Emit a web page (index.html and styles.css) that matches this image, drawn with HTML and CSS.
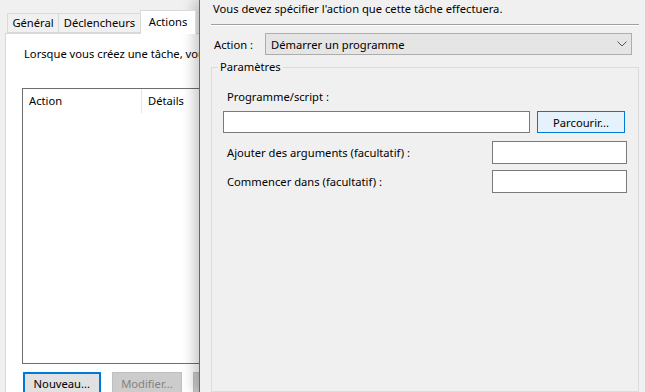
FILE: index.html
```html
<!DOCTYPE html>
<html lang="fr">
  <head>
    <meta charset="UTF-8" />
    <meta name="viewport" content="width=device-width, initial-scale=1.0" />
    <title>Nouvelle action</title>
    <link rel="stylesheet" href="styles.css">
  </head>
  <body>
    <div class="screen">
      <div class="task-window">
        <div class="tabs">
          <div class="tab tab-general">Général</div>
          <div class="tab tab-triggers">Déclencheurs</div>
          <div class="tab tab-actions active">Actions</div>
        </div>
        <div class="tab-panel">
          <p class="intro">Lorsque vous créez une tâche, vous</p>
          <div class="list">
            <div class="list-head">
              <span class="col-action">Action</span>
              <span class="col-details">Détails</span>
            </div>
          </div>
          <div class="list-buttons">
            <button class="btn btn-focus">Nouveau...</button>
            <button class="btn" disabled>Modifier...</button>
            <button class="btn" disabled>Supprimer</button>
          </div>
        </div>
      </div>

      <div class="action-dialog">
        <p class="hint">Vous devez spécifier l'action que cette tâche effectuera.</p>
        <div class="separator"></div>

        <div class="action-row">
          <label for="action">Action :</label>
          <div class="combo" id="action">
            <span>Démarrer un programme</span>
            <svg width="10" height="6" viewBox="0 0 10 6">
              <polyline points="0.5,0.5 5,5 9.5,0.5" fill="none" stroke="#555" stroke-width="1" />
            </svg>
          </div>
        </div>

        <fieldset class="group">
          <legend>Paramètres</legend>
          <div class="field-label">Programme/script :</div>
          <div class="program-row">
            <input type="text" class="input input-program" />
            <button class="btn btn-browse">Parcourir...</button>
          </div>
          <div class="option-row first">
            <label>Ajouter des arguments (facultatif) :</label>
            <input type="text" class="input input-small" />
          </div>
          <div class="option-row">
            <label>Commencer dans (facultatif) :</label>
            <input type="text" class="input input-small" />
          </div>
        </fieldset>
      </div>
    </div>
  </body>
</html>
```

FILE: styles.css
```css
* {
  margin: 0;
  padding: 0;
  box-sizing: border-box;
}
body {
  font-family: "Noto Sans", sans-serif;
  font-size: 11.2px;
  color: #000;
  background: #f0f0f0;
  overflow: hidden;
}
.screen {
  display: flex;
  height: 392px;
  overflow: hidden;
}

/* fenetre de la tache, en arriere-plan */
.task-window {
  width: 199px;
  flex-shrink: 0;
  overflow: hidden;
  background: #f0f0f0;
}
.tabs {
  display: flex;
  align-items: flex-end;
  height: 34px;
  padding-left: 7px;
  padding-top: 10px;
}
.tab {
  height: 20px;
  line-height: 18px;
  text-align: center;
  border: 1px solid #d9d9d9;
  border-right: none;
  background: #f0f0f0;
  white-space: nowrap;
  margin-bottom: 1px;
}
.tab-general {
  width: 51px;
}
.tab-triggers {
  width: 82px;
}
.tab-actions {
  width: 56px;
}
.tab.active {
  height: 24px;
  line-height: 22px;
  margin-bottom: 0;
  background: #fff;
  border-right: 1px solid #d9d9d9;
  border-bottom: none;
  position: relative;
  z-index: 1;
}
.tab-panel {
  width: 260px;
  height: 400px;
  margin-left: 5px;
  margin-top: -1px;
  background: #fff;
  border: 1px solid #d9d9d9;
  padding: 12px 0 0 16px;
}
.intro {
  padding-left: 2px;
  white-space: nowrap;
  line-height: 16px;
}
.list {
  margin-top: 26px;
  width: 240px;
  height: 276px;
  border: 1px solid #6e6e6e;
}
.list-head {
  display: flex;
  height: 24px;
  line-height: 24px;
}
.col-action {
  width: 119px;
  padding-left: 6px;
  border-right: 1px solid #e5e5e5;
}
.col-details {
  padding-left: 6px;
}
.list-buttons {
  display: flex;
  gap: 11px;
  margin-top: 8px;
  padding-left: 1px;
}
.btn {
  font-family: inherit;
  font-size: 11.2px;
  height: 23px;
  background: #e1e1e1;
  border: 1px solid #adadad;
  color: #000;
}
.list-buttons .btn {
  width: 72px;
}
.list-buttons .btn-focus {
  width: 79px;
  border: 2px solid #0078d7;
}
.btn:disabled {
  background: #cccccc;
  border-color: #bfbfbf;
  color: #838383;
}

/* boite de dialogue "Nouvelle action" */
.action-dialog {
  flex: 1;
  display: flex;
  flex-direction: column;
  background: #f0f0f0;
  border-left: 1px solid #1a7bd0;
  padding: 1px 6px 0 11px;
  position: relative;
  box-shadow: -5px 0 12px rgba(0, 0, 0, 0.22);
}
.hint {
  line-height: 16px;
  padding-left: 2px;
}
.separator {
  margin-top: 7px;
  border-top: 1px solid #a0a0a0;
  border-bottom: 1px solid #fff;
}
.action-row {
  display: flex;
  align-items: center;
  margin-top: 7px;
  padding-left: 3px;
}
.action-row label {
  width: 51px;
  flex-shrink: 0;
}
.combo {
  width: 367px;
  height: 22px;
  display: flex;
  align-items: center;
  justify-content: space-between;
  padding: 0 4px 0 5px;
  background: #e5e5e5;
  border: 1px solid #adadad;
}
.group {
  margin-top: 4px;
  height: 400px;
  border: 1px solid #dcdcdc;
  padding: 14px 11px 0 11px;
}
.group legend {
  margin-left: -5px;
  padding: 0 2px;
  line-height: 16px;
}
.field-label {
  padding-left: 4px;
  line-height: 16px;
}
.program-row {
  display: flex;
  margin-top: 6px;
}
.input {
  height: 22px;
  border: 1px solid #7a7a7a;
  background: #fff;
  outline: none;
}
.input-program {
  width: 307px;
}
.btn-browse {
  width: 88px;
  height: 22px;
  margin-left: 7px;
  background: #e5f1fb;
  border: 1px solid #0078d7;
}
.option-row {
  display: flex;
  align-items: center;
  justify-content: space-between;
  padding-left: 4px;
  margin-top: 6px;
}
.option-row.first {
  margin-top: 8px;
}
.input-small {
  width: 135px;
  height: 23px;
}
```
